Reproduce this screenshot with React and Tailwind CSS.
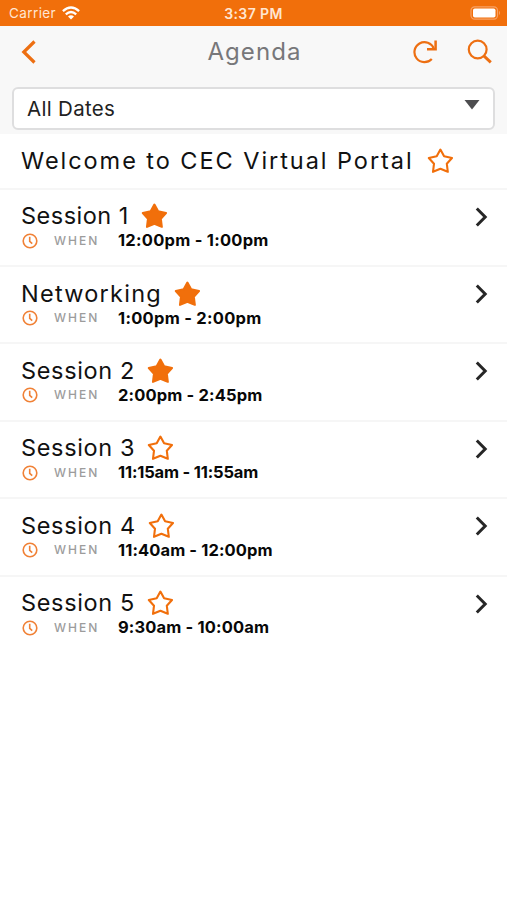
const SESSIONS = [
  { title: "Session 1", time: "12:00pm - 1:00pm", starred: true, titleClass: "w-[107px] tracking-[0.5px]", timeClass: "tracking-[0.25px]" },
  { title: "Networking", time: "1:00pm - 2:00pm", starred: true, titleClass: "w-[140px] tracking-[1.25px]", timeClass: "tracking-[0.27px]" },
  { title: "Session 2", time: "2:00pm - 2:45pm", starred: true, titleClass: "w-[113px] tracking-[0.65px]", timeClass: "tracking-[0.15px]" },
  { title: "Session 3", time: "11:15am - 11:55am", starred: false, titleClass: "w-[113px] tracking-[0.65px]", timeClass: "tracking-[-0.17px]" },
  { title: "Session 4", time: "11:40am - 12:00pm", starred: false, titleClass: "w-[114px] tracking-[0.65px]", timeClass: "tracking-[0.1px]" },
  { title: "Session 5", time: "9:30am - 10:00am", starred: false, titleClass: "w-[113px] tracking-[0.65px]", timeClass: "tracking-[0.15px]" },
];

function Star({ filled }) {
  return (
    <svg
      className="w-[26px] h-[26px] shrink-0"
      viewBox="0 0 26 26"
      fill={filled ? "#f16f0b" : "none"}
      stroke="#f16f0b"
      strokeWidth="2.1"
      strokeLinejoin="round"
    >
      <path d="M13.4 1.6 L17.1 8.3 L25 10 L19.8 15.7 L20.8 23.8 L13.4 20.8 L6 23.8 L7 15.7 L1.8 10 L9.7 8.3 Z" />
    </svg>
  );
}

function StatusBar() {
  return (
    <div className="relative flex h-[25.5px] items-center justify-between bg-[#f16f0b] pl-[9px] pr-[6px] pt-px text-[13.5px] text-[#ffe6d2]">
      <div className="flex items-center gap-[6px]">
        <span className="tracking-[0.4px]">Carrier</span>
        <svg className="mb-px w-[18px] h-[14px]" viewBox="0 0 18 14" fill="none" stroke="#fff" strokeWidth="2.3">
          <path d="M0.9 5.2 Q9 -2.2 17.1 5.2" />
          <path d="M3.8 8.3 Q9 3.6 14.2 8.3" />
          <path d="M9 13.4 L6 10.4 Q9 7.9 12 10.4 Z" fill="#fff" stroke="none" />
        </svg>
      </div>
      <span className="absolute inset-x-0 text-center text-[14px] font-semibold tracking-[0.4px]">3:37 PM</span>
      <svg className="w-[31px] h-[14px]" viewBox="0 0 31 14">
        <rect x="1" y="0.8" width="26.5" height="12.4" rx="3.6" fill="none" stroke="#f7a266" strokeWidth="1.2" />
        <rect x="3" y="2.5" width="22.5" height="9" rx="1.8" fill="#fff" />
        <path d="M29 4.8 Q31 7 29 9.2 Z" fill="#f7a266" />
      </svg>
    </div>
  );
}

function NavBar() {
  return (
    <div className="grid h-[52px] grid-cols-3 items-center pl-[20px] pr-[15px]">
      <svg className="w-[17px] h-[24px]" viewBox="0 0 17 24" fill="none" stroke="#ed6f12" strokeWidth="3.2">
        <path d="M14.5 1.5 L3.8 12 L14.5 22.5" />
      </svg>
      <h1 className="whitespace-nowrap pr-[3px] pt-px text-center text-[24px] leading-none tracking-[1.1px] text-[#77777a]">Agenda</h1>
      <div className="flex items-center justify-end gap-[29px]">
        <svg className="w-[25px] h-[25px]" viewBox="0 0 25 25" fill="none" stroke="#ed6f12" strokeWidth="2.2">
          <path d="M18.8 19.9 A10 10 0 1 1 20.8 9.6" />
          <path d="M22.6 1.6 V10.3 H14" strokeWidth="2.5" />
        </svg>
        <svg className="w-[25px] h-[25px]" viewBox="0 0 25 25" fill="none" stroke="#ed6f12" strokeWidth="2.2">
          <circle cx="10.7" cy="10.5" r="8.9" />
          <path d="M16.9 16.9 L23.8 23.4" strokeWidth="2.9" />
        </svg>
      </div>
    </div>
  );
}

function DateSelect() {
  return (
    <div className="mx-[12px] mt-[9.5px] flex h-[43px] items-center justify-between rounded-[6px] border-2 border-[#dededf] bg-white pl-[13px] pr-[13px]">
      <span className="pt-[2px] text-[20.5px] leading-none tracking-[0.3px] text-[#222]">All Dates</span>
      <svg className="mb-[8px] w-[16px] h-[10px]" viewBox="0 0 16 10">
        <path d="M0.5 0 H15.5 L8 9.5 Z" fill="#4d4d4f" />
      </svg>
    </div>
  );
}

function SessionRow({ session, last }) {
  return (
    <li className={`flex h-[77.4px] items-start justify-between border-b-2 pl-[21px] pr-[18px] pt-[13.5px] ${last ? "border-white" : "border-[#f6f6f6]"}`}>
      <div>
        <div className="flex h-[26px] items-center gap-[13px]">
          <span className={`whitespace-nowrap text-[23.5px] leading-[26px] text-[#111] ${session.titleClass}`}>{session.title}</span>
          <Star filled={session.starred} />
        </div>
        <div className="flex h-[23px] items-center">
          <svg className="ml-[1px] w-[16px] h-[16px]" viewBox="0 0 16 16" fill="none" stroke="#f08136" strokeWidth="1.6">
            <circle cx="8" cy="8" r="6.8" />
            <path d="M7.7 3.8 V8.3 L10.2 10.7" />
          </svg>
          <span className="ml-[16px] w-[64px] text-[12px] font-medium tracking-[2px] text-[#9c9c9c]">WHEN</span>
          <span className={`whitespace-nowrap text-[16.5px] leading-[23px] font-bold text-[#080808] ${session.timeClass}`}>{session.time}</span>
        </div>
      </div>
      <svg className="mt-[3.5px] w-[14px] h-[20px]" viewBox="0 0 14 20" fill="none" stroke="#262626" strokeWidth="3">
        <path d="M1.8 1.5 L10.2 10 L1.8 18.5" />
      </svg>
    </li>
  );
}

export default function App() {
  return (
    <div className="h-[900px] w-[507px] overflow-hidden bg-white font-['Inter',sans-serif]">
      <StatusBar />
      <header className="h-[108.5px] bg-[#f8f8f8]">
        <NavBar />
        <DateSelect />
      </header>
      <ul>
        <li className="flex h-[55.7px] items-center gap-[13px] border-b-2 border-[#f6f6f6] pl-[21px]">
          <span className="w-[393px] whitespace-nowrap text-[23.5px] leading-[26px] tracking-[1.95px] text-[#111]">
            Welcome to CEC Virtual Portal
          </span>
          <Star filled={false} />
        </li>
        {SESSIONS.map((session, i) => (
          <SessionRow key={session.title} session={session} last={i === SESSIONS.length - 1} />
        ))}
      </ul>
    </div>
  );
}
